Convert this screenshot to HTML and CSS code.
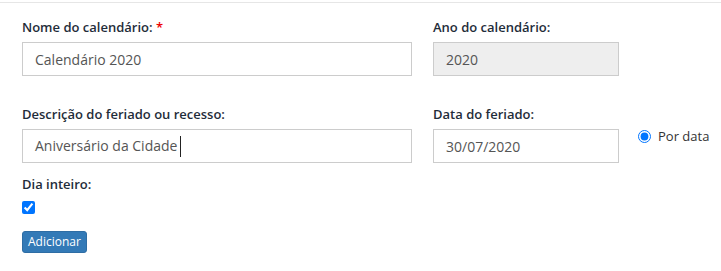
FILE: index.html
```html
<!DOCTYPE html>
<html lang="pt-BR">
<head>
<meta charset="utf-8">
<title>Calendário</title>
<link rel="stylesheet" href="styles.css">
</head>
<body>
<div class="topline"></div>
<form class="form">
  <div class="row row-1">
    <div class="field wide">
      <label class="lbl">Nome do calendário: <span class="req">*</span></label>
      <input class="ctl" type="text" value="Calendário 2020">
    </div>
    <div class="field narrow">
      <label class="lbl">Ano do calendário:</label>
      <input class="ctl ctl-ro" type="text" value="2020" readonly>
    </div>
  </div>
  <div class="row row-2">
    <div class="field wide">
      <label class="lbl">Descrição do feriado ou recesso:</label>
      <div class="ctl ctl-box">Aniversário da Cidade<span class="caret"></span></div>
    </div>
    <div class="field narrow">
      <label class="lbl">Data do feriado:</label>
      <input class="ctl" type="text" value="30/07/2020">
    </div>
    <label class="radio-opt"><input type="radio" name="tipo" checked><span>Por data</span></label>
  </div>
  <div class="field full">
    <label class="lbl">Dia inteiro:</label>
    <input class="chk" type="checkbox" checked>
  </div>
  <div class="actions">
    <button type="button" class="btn">Adicionar</button>
  </div>
</form>
</body>
</html>
```
FILE: styles.css
```css
html, body {
  margin: 0;
  padding: 0;
  background: #fff;
}
body {
  font-family: "Open Sans", "Liberation Sans", sans-serif;
  color: #333;
}
.topline {
  height: 2px;
  border-bottom: 1px solid #e6e6e6;
}
.form {
  padding: 15px 0 0 22px;
}
.row {
  display: flex;
  gap: 21px;
}
.row-2 {
  margin-top: 29px;
}
.field {
  display: flex;
  flex-direction: column;
}
.wide { width: 390px; }
.narrow { width: 186px; }
.lbl {
  font-size: 13px;
  font-weight: 600;
  line-height: 18px;
  margin-bottom: 6px;
  color: #1f2d3a;
}
.req { color: #e00; }
.ctl {
  box-sizing: border-box;
  height: 34px;
  width: 100%;
  padding: 6px 12px;
  border: 1px solid #ccc;
  font-family: "Open Sans", "Liberation Sans", sans-serif;
  font-size: 14px;
  line-height: 20px;
  color: #555;
  background: #fff;
  border-radius: 0;
  outline: none;
}
.ctl-ro { background: #eee; }
.ctl-box {
  display: flex;
  align-items: center;
  white-space: nowrap;
}
.caret {
  display: inline-block;
  width: 1px;
  height: 21px;
  background: #222;
  margin-left: 3px;
}
.radio-opt {
  display: flex;
  align-items: center;
  margin-top: 22px;
  align-self: flex-start;
  font-size: 13px;
  color: #333;
  margin-left: -2px;
}
.radio-opt input {
  margin: 0 7px 0 0;
  width: 13px;
  height: 13px;
}
.full {
  margin-top: 12px;
}
.full .lbl {
  margin-bottom: 8px;
}
.chk {
  margin: 0;
  width: 13px;
  height: 13px;
}
.actions {
  margin-top: 15px;
}
.btn {
  font-family: "Open Sans", "Liberation Sans", sans-serif;
  font-size: 12px;
  line-height: 18px;
  padding: 1px 5px;
  color: #fff;
  background: #337ab7;
  border: 1px solid #2e6da4;
  border-radius: 3px;
  cursor: pointer;
}
```
